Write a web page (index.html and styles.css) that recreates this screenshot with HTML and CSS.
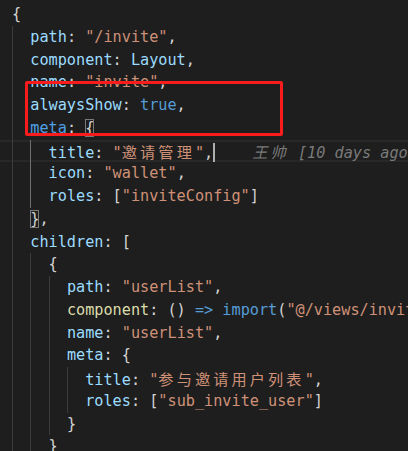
FILE: index.html
```html
<!DOCTYPE html>
<html>
<head>
<meta charset="utf-8">
<link rel="stylesheet" href="styles.css">
</head>
<body>
<div class="editor">
  <div class="line"><span class="p">{</span></div>
  <div class="line"><span class="g"></span><span class="k">path</span><span class="p">: </span><span class="s">"/invite"</span><span class="p">,</span></div>
  <div class="line"><span class="g"></span><span class="k">component</span><span class="p">: </span><span class="k">Layout</span><span class="p">,</span></div>
  <div class="line"><span class="g"></span><span class="k">name</span><span class="p">: </span><span class="s">"invite"</span><span class="p">,</span></div>
  <div class="line"><span class="g"></span><span class="k">alwaysShow</span><span class="p">: </span><span class="b">true</span><span class="p">,</span></div>
  <div class="line"><span class="g"></span><span class="km">meta</span><span class="p">: </span><span class="p bm">{</span></div>
  <div class="line cur"><span class="g"></span><span class="g act"></span><span class="k">title</span><span class="p">: </span><span class="s">"<span class="cjk">邀请管理</span>"</span><span class="p">,</span><span class="caret"></span><span class="blame"><span class="cjk">王帅</span> [10 days ago]</span></div>
  <div class="line"><span class="g"></span><span class="g act"></span><span class="k">icon</span><span class="p">: </span><span class="s">"wallet"</span><span class="p">,</span></div>
  <div class="line"><span class="g"></span><span class="g act"></span><span class="k">roles</span><span class="p">: [</span><span class="s">"inviteConfig"</span><span class="p">]</span></div>
  <div class="line"><span class="g"></span><span class="p bm">}</span><span class="p">,</span></div>
  <div class="line"><span class="g"></span><span class="k">children</span><span class="p">: [</span></div>
  <div class="line"><span class="g"></span><span class="g"></span><span class="p">{</span></div>
  <div class="line"><span class="g"></span><span class="g"></span><span class="g"></span><span class="k">path</span><span class="p">: </span><span class="s">"userList"</span><span class="p">,</span></div>
  <div class="line"><span class="g"></span><span class="g"></span><span class="g"></span><span class="f">component</span><span class="p">: () </span><span class="b">=&gt;</span> <span class="b">import</span><span class="p">(</span><span class="s">"@/views/invite/userList"</span><span class="p">),</span></div>
  <div class="line"><span class="g"></span><span class="g"></span><span class="g"></span><span class="k">name</span><span class="p">: </span><span class="s">"userList"</span><span class="p">,</span></div>
  <div class="line"><span class="g"></span><span class="g"></span><span class="g"></span><span class="k">meta</span><span class="p">: {</span></div>
  <div class="line"><span class="g"></span><span class="g"></span><span class="g"></span><span class="g"></span><span class="k">title</span><span class="p">: </span><span class="s">"<span class="cjk">参与邀请用户列表</span>"</span><span class="p">,</span></div>
  <div class="line"><span class="g"></span><span class="g"></span><span class="g"></span><span class="g"></span><span class="k">roles</span><span class="p">: [</span><span class="s">"sub_invite_user"</span><span class="p">]</span></div>
  <div class="line"><span class="g"></span><span class="g"></span><span class="g"></span><span class="p">}</span></div>
  <div class="line"><span class="g"></span><span class="g"></span><span class="p">}</span></div>
  <div class="mark"></div>
</div>
</body>
</html>
```

FILE: styles.css
```css
html, body {
  margin: 0;
  padding: 0;
  background: #1e1e1e;
  overflow: hidden;
}
.editor {
  position: relative;
  width: 408px;
  height: 451px;
  padding-top: 3px;
  box-sizing: border-box;
  font-family: "DejaVu Sans Mono", "Liberation Mono", "Noto Sans CJK SC", monospace;
  font-size: 15.2px;
  color: #d4d4d4;
  overflow: hidden;
}
.line {
  height: 22.75px;
  line-height: 22.75px;
  white-space: pre;
  padding-left: 12px;
}
.line.cur {
  box-shadow: inset 0 2px 0 #282828, inset 0 -2px 0 #282828;
}
.g {
  display: inline-block;
  width: 18.3px;
  height: 22.75px;
  vertical-align: top;
  border-left: 1px solid #3c3c3c;
  box-sizing: border-box;
}
.g.act {
  border-left-color: #6e6e6e;
}
.k { color: #9cdcfe; }
.km { color: #4f9fe3; }
.s { color: #ce9178; }
.p { color: #d4d4d4; }
.b { color: #569cd6; }
.f { color: #dcdcaa; }
.bm {
  outline: 1px solid #7a7a7a;
  outline-offset: -1px;
}
.cjk {
  font-family: "Noto Sans CJK SC", sans-serif;
  font-size: 15.2px;
  letter-spacing: 3.1px;
}
.caret {
  display: inline-block;
  width: 2px;
  height: 19px;
  background: #aeafad;
  vertical-align: middle;
  margin-top: -2px;
}
.blame {
  color: #7a7a7a;
  font-style: italic;
  margin-left: 37px;
}
.mark {
  position: absolute;
  left: 25px;
  top: 81px;
  width: 258px;
  height: 55px;
  border: 3px solid #f81c1c;
  border-radius: 2px;
  box-sizing: border-box;
}
```
